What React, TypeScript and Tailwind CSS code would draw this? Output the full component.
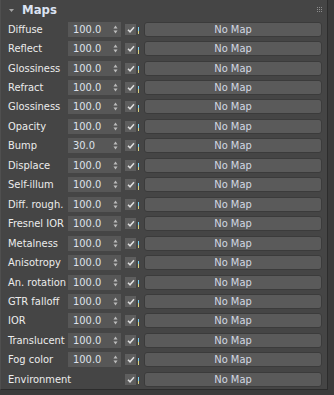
import React from "react";

const rows: { label: string; value?: string }[] = [
  { label: "Diffuse", value: "100.0" },
  { label: "Reflect", value: "100.0" },
  { label: "Glossiness", value: "100.0" },
  { label: "Refract", value: "100.0" },
  { label: "Glossiness", value: "100.0" },
  { label: "Opacity", value: "100.0" },
  { label: "Bump", value: "30.0" },
  { label: "Displace", value: "100.0" },
  { label: "Self-illum", value: "100.0" },
  { label: "Diff. rough.", value: "100.0" },
  { label: "Fresnel IOR", value: "100.0" },
  { label: "Metalness", value: "100.0" },
  { label: "Anisotropy", value: "100.0" },
  { label: "An. rotation", value: "100.0" },
  { label: "GTR falloff", value: "100.0" },
  { label: "IOR", value: "100.0" },
  { label: "Translucent", value: "100.0" },
  { label: "Fog color", value: "100.0" },
  { label: "Environment" },
];

function Spinner() {
  return (
    <svg width="5" height="9" viewBox="0 0 5 9" className="shrink-0">
      <path d="M2.5 0.5 L4.5 3.5 L0.5 3.5 Z" fill="#bdbdbd" />
      <path d="M0.5 5.5 L4.5 5.5 L2.5 8.5 Z" fill="#bdbdbd" />
    </svg>
  );
}

function Check() {
  return (
    <div className="w-[11px] h-[11px] bg-[#5e5e5e] flex items-center justify-center shrink-0">
      <svg width="8" height="7" viewBox="0 0 8 7">
        <path d="M1 3.8 L3 5.8 L7 1.2" stroke="#dedede" strokeWidth="1.5" fill="none" />
      </svg>
    </div>
  );
}

function Row({ label, value }: { label: string; value?: string }) {
  return (
    <div className="h-[19.5px] flex items-center">
      <div className="w-[67px] pl-[7px] text-[11px] text-[#ececec] leading-none whitespace-nowrap">
        {label}
      </div>
      {value ? (
        <div className="w-[53px] h-[15px] bg-[#575757] flex items-center pl-[5px] pr-[3px] shrink-0">
          <span className="flex-1 text-[11px] text-[#dde2ea] leading-none">{value}</span>
          <Spinner />
        </div>
      ) : (
        <div className="w-[53px] shrink-0" />
      )}
      <div className="w-[4px] shrink-0" />
      <Check />
      <div className="w-[2px] shrink-0" />
      <div className="w-[1px] h-[7px] mt-[3px] flex flex-col shrink-0">
        <div className="flex-1 bg-[#7ad0f0]" />
        <div className="flex-1 bg-[#d8d080]" />
      </div>
      <div className="w-[5px] shrink-0" />
      <div className="w-[178px] h-[15px] rounded-[3px] bg-[#5a5a5a] border border-[#3b3b3b] flex items-center justify-center text-[11px] text-[#d2d8e2] leading-none shrink-0">
        No Map
      </div>
    </div>
  );
}

export default function App() {
  return (
    <div
      className="w-[334px] h-[395px] bg-[#3b3b3b] overflow-hidden"
      style={{ fontFamily: '"DejaVu Sans Condensed", "Liberation Sans", Arial, sans-serif' }}
    >
      <div className="w-[328px] h-[390px] bg-[#454545] border-l border-l-[#4f4f4f] border-r border-r-[#2c2c2c] border-b border-b-[#2c2c2c] flex flex-col">
        <div className="h-[19.5px] flex items-center relative">
          <svg width="5" height="3" viewBox="0 0 5 3" className="ml-[8px] mt-[1px]">
            <path d="M0 0 L5 0 L2.5 3 Z" fill="#a5a5a5" />
          </svg>
          <span className="ml-[8px] text-[13px] font-bold text-[#dbe3f2] leading-none">Maps</span>
          <div className="absolute left-[316px] top-[7px] grid grid-cols-3 gap-[1px]">
            {Array.from({ length: 9 }).map((_, i) => (
              <div key={i} className="w-[1px] h-[1px] bg-[#8c8c8c]" />
            ))}
          </div>
        </div>
        {rows.map((r, i) => (
          <Row key={i} label={r.label} value={r.value} />
        ))}
      </div>
    </div>
  );
}
